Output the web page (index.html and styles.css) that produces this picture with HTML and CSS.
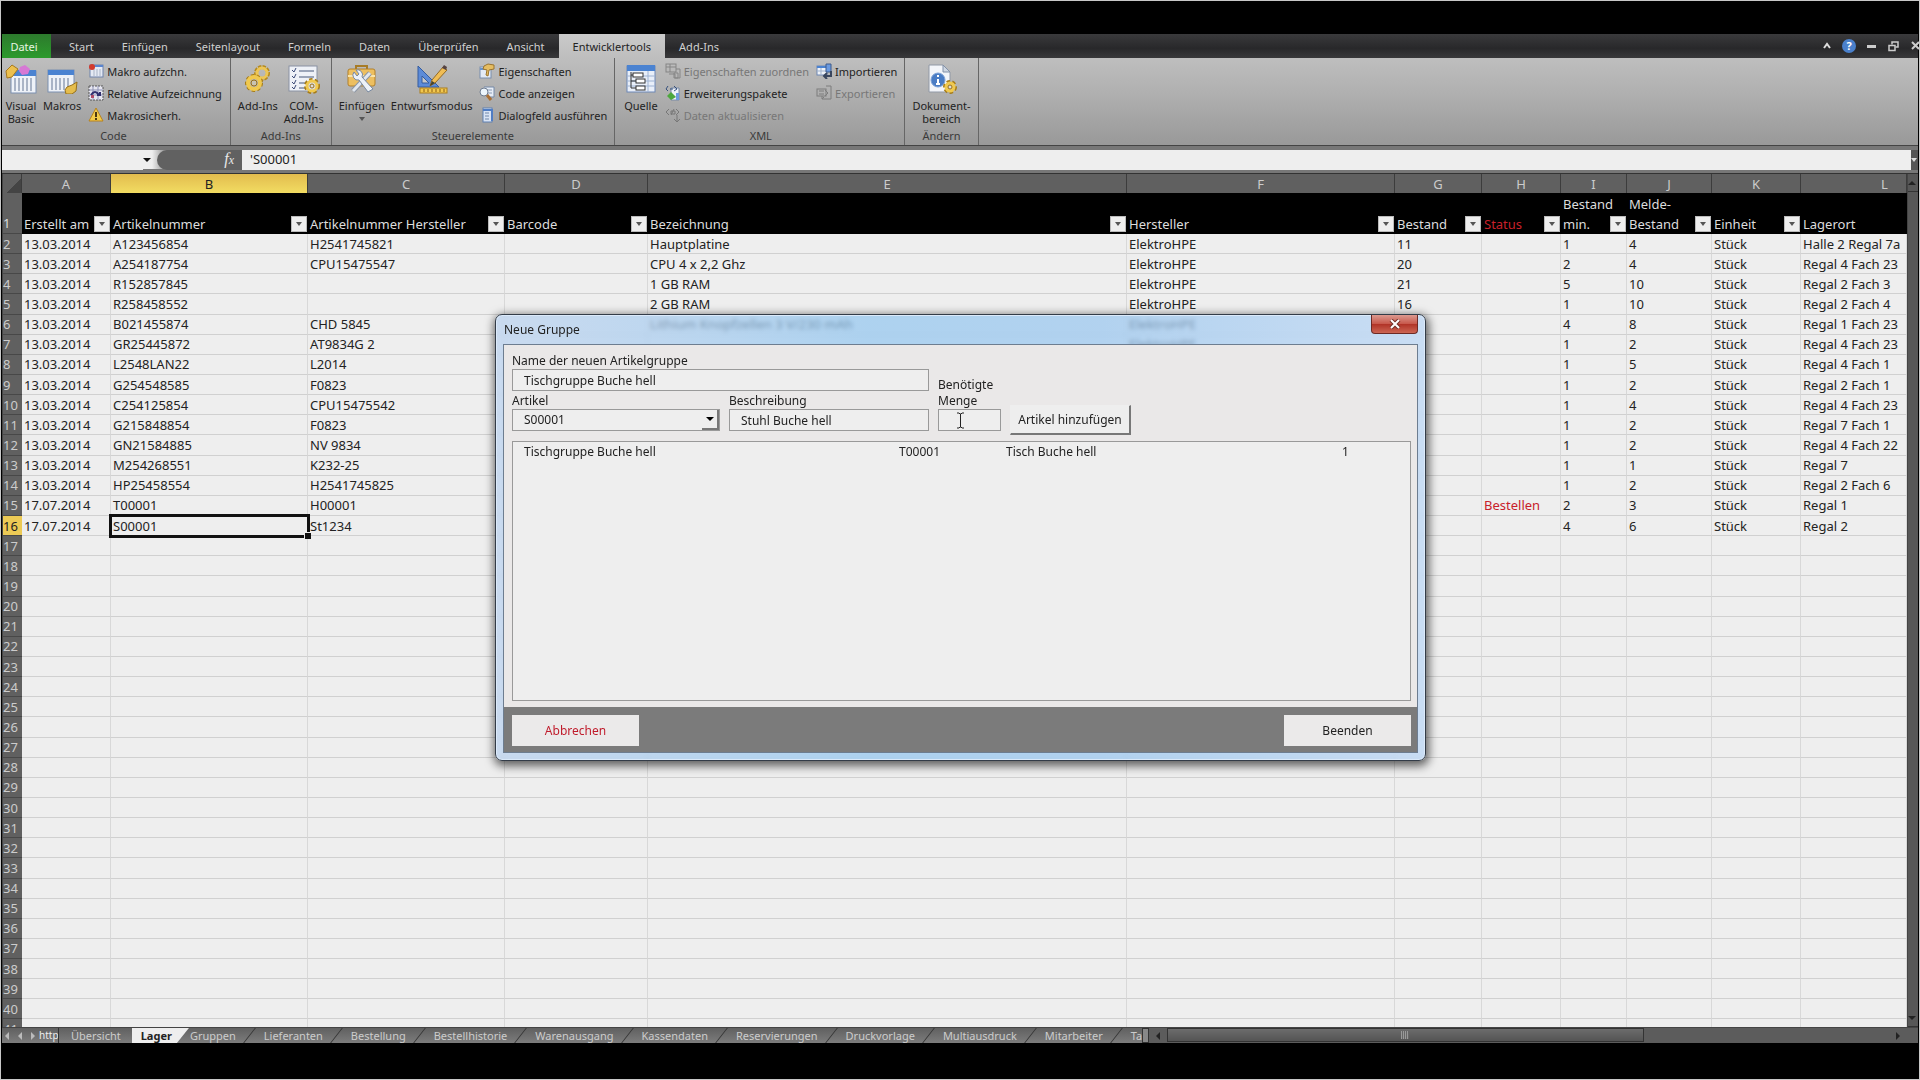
FILE: index.html
```html
<!DOCTYPE html>
<html lang="de">
<head>
    <meta charset="UTF-8">
    <meta name="viewport" content="width=device-width, initial-scale=1.0">
    <title>Lager</title>
    <link rel="stylesheet" href="styles.css">
</head>
<body>
    <!-- ribbon tabs -->
    <nav class="tabs">
        <button class="tab file">Datei</button>
        <button class="tab">Start</button>
        <button class="tab">Einfügen</button>
        <button class="tab">Seitenlayout</button>
        <button class="tab">Formeln</button>
        <button class="tab">Daten</button>
        <button class="tab">Überprüfen</button>
        <button class="tab">Ansicht</button>
        <button class="tab active">Entwicklertools</button>
        <button class="tab">Add-Ins</button>
        <div class="window-buttons">
            <button class="win" aria-label="Menüband minimieren"><svg width="10" height="10" viewBox="0 0 10 10"><path d="M2 7l3-4 3 4" fill="none" stroke="#ddd" stroke-width="2"/></svg></button>
            <button class="win help" aria-label="Hilfe">?</button>
            <button class="win" aria-label="Minimieren"><svg width="10" height="10" viewBox="0 0 10 10"><rect x="1" y="4" width="9" height="3" fill="#ccc"/></svg></button>
            <button class="win" aria-label="Wiederherstellen"><svg width="11" height="11" viewBox="0 0 11 11" fill="none" stroke="#ccc"><path d="M4 3.500V1h6v5H7.500" stroke-width="1.500"/><rect x="1" y="4.500" width="6" height="5" stroke-width="1.500"/></svg></button>
            <button class="win" aria-label="Schließen"><svg width="10" height="10" viewBox="0 0 10 10"><path d="M2 1l7 7M9 1L2 8" stroke="#ccc" stroke-width="2"/></svg></button>
        </div>
    </nav>

    <div class="ribbon">
        <section class="group">
            <div class="tools">
                <button class="large">
                    <svg width="32" height="30" viewBox="0 0 32 30"><rect x="6" y="7" width="25" height="22" fill="#eef2f8" stroke="#7b8fb0"/><rect x="6" y="6" width="25" height="6" fill="#4b83d1"/><path d="M10 14v13M14 14v13M18 14v13M22 14v13M26 14v13" stroke="#a9b4c6" stroke-width="2"/><path d="M1 7l6-6 6 4-6 8-5 1z" fill="#ecc04e" stroke="#a8791c"/><path d="M15 3l5-2 5 4-2 5-6 1-3-4z" fill="#d678d4"/></svg>
                    Visual<br>Basic
                </button>
                <button class="large">
                    <svg width="32" height="30" viewBox="0 0 32 30"><rect x="2" y="6" width="26" height="22" fill="#eef2f8" stroke="#7b8fb0"/><rect x="2" y="6" width="26" height="5" fill="#4b83d1"/><path d="M6 14v12M10 14v12M14 14v12M18 14v12M22 14v12" stroke="#a9b4c6" stroke-width="2"/><path d="M21 23l5-2 5-3-1 9-4 3h-6l-1-4z" fill="#e5bd4d" stroke="#97701c"/></svg>
                    Makros
                </button>
                <div class="stack">
                    <button class="small"><svg width="16" height="16" viewBox="0 0 16 16"><rect x="2" y="2" width="13" height="12" fill="#e5eaf4" stroke="#6f83ab"/><path d="M2 3h13" stroke="#5a85cf" stroke-width="2"/><path d="M6 6v7M9 6v7M12 6v7" stroke="#a9b4c6"/><circle cx="4" cy="4" r="3" fill="#d23b2e"/></svg>Makro aufzchn.</button>
                    <button class="small"><svg width="16" height="16" viewBox="0 0 16 16"><rect x="1" y="1" width="14" height="14" fill="#e6e6f0" stroke="#555" stroke-dasharray="2 1"/><path d="M1 5h14M1 10h14M5 1v14M10 1v14" stroke="#8f93b5"/><path d="M3 10q4-6 8 0M9 10h3V7" fill="none" stroke="#31306e" stroke-width="2"/><rect x="3" y="10" width="3" height="3" fill="#b14b67"/></svg>Relative Aufzeichnung</button>
                    <button class="small"><svg width="16" height="16" viewBox="0 0 16 16"><path d="M8 1l7 13H1z" fill="#f3cb4b" stroke="#b8821c"/><path d="M8 5v5M8 11v2" stroke="#4a3510" stroke-width="2"/></svg>Makrosicherh.</button>
                </div>
            </div>
            <h2>Code</h2>
        </section>

        <section class="group">
            <div class="tools">
                <button class="large">
                    <svg width="32" height="30" viewBox="0 0 32 30" fill="none"><circle cx="20" cy="9" r="6" stroke="#b58a1e" stroke-width="4" stroke-dasharray="3 1"/><circle cx="20" cy="9" r="5" stroke="#edc655" stroke-width="3"/><circle cx="12" cy="19" r="7" stroke="#a67c18" stroke-width="4" stroke-dasharray="3 2"/><circle cx="12" cy="19" r="6" stroke="#f0c94f" stroke-width="4"/><circle cx="12" cy="19" r="3" fill="#c9c3b2" stroke="#97701c"/></svg>
                    Add-Ins
                </button>
                <button class="large">
                    <svg width="32" height="30" viewBox="0 0 32 30" fill="none"><rect x="1" y="2" width="28" height="25" fill="#eef1f7" stroke="#8a92a3"/><path d="M4 6l2 2 2-4M4 12l2 2 2-4M4 18l2 2 2-4M4 23l2 2 2-4" stroke="#3b4a78"/><path d="M11 7h15M11 13h15M11 19h8M11 24h7" stroke="#9aa4b8" stroke-width="2"/><circle cx="24" cy="22" r="6" stroke="#a67c18" stroke-width="4" stroke-dasharray="3 2"/><circle cx="24" cy="22" r="5" fill="#ddd" stroke="#f0c94f" stroke-width="3"/><circle cx="24" cy="22" r="2" fill="#ddd" stroke="#97701c"/></svg>
                    COM-<br>Add-Ins
                </button>
            </div>
            <h2>Add-Ins</h2>
        </section>

        <section class="group">
            <div class="tools">
                <button class="large">
                    <svg width="32" height="30" viewBox="0 0 32 30"><path d="M10 6V2h11v4" fill="none" stroke="#a77b26" stroke-width="2"/><rect x="2" y="5" width="27" height="17" rx="2" fill="#edbf60" stroke="#b1802c"/><path d="M2 12h27" stroke="#f9e4ab" stroke-width="2"/><path d="M7 27L24 9" stroke="#8b95a3" stroke-width="5"/><path d="M7 27L24 9" stroke="#e1e7ef" stroke-width="3"/><path d="M8 8a5 5 0 0 0 5 8l9 12 5-3-11-12a5 5 0 0 0-6-7l3 4-2 2z" fill="#edf2f8" stroke="#7788a0"/></svg>
                    Einfügen
                    <i class="caret"></i>
                </button>
                <button class="large">
                    <svg width="32" height="30" viewBox="0 0 32 30"><path d="M2 2v21h21z" fill="#5c8bd8" stroke="#345c9f"/><path d="M6 12v7h7z" fill="#c8c8c8" stroke="#345c9f"/><rect x="4" y="24" width="27" height="5" fill="#f1c850" stroke="#ac7e1d"/><path d="M8 25v3M12 25v3M16 25v3M20 25v3M24 25v3M28 25v3" stroke="#8c5f12"/><path d="M14 22l2-6L27 3l4 3-12 13z" fill="#f0bd55" stroke="#946a22"/><path d="M26 4l2-3 3 2-1 3z" fill="#554444"/><path d="M14 22l2-5 3 2z" fill="#443"/></svg>
                    Entwurfsmodus
                </button>
                <div class="stack">
                    <button class="small"><svg width="16" height="16" viewBox="0 0 16 16"><rect x="1" y="4" width="11" height="11" fill="#e3ebf6" stroke="#788eae"/><path d="M1 6h11" stroke="#6794cf" stroke-width="2"/><path d="M5 3l4-2 6 1v4l-5 1-1 6-2-1 1-5-4-1z" fill="#e5bd62" stroke="#9a742f"/></svg>Eigenschaften</button>
                    <button class="small"><svg width="16" height="16" viewBox="0 0 16 16"><path d="M5 2h10v10H9" fill="#e7edf6" stroke="#7589a7"/><path d="M7 5h6M8 8h5" stroke="#8b9cb6"/><circle cx="5" cy="7" r="4" fill="#edf5fb" stroke="#6f7c90"/><path d="M8 10l4 5" stroke="#a96f35" stroke-width="3"/></svg>Code anzeigen</button>
                    <button class="small"><svg width="16" height="16" viewBox="0 0 16 16"><rect x="4" y="1" width="9" height="14" fill="#d9e4f5" stroke="#5f80b2"/><path d="M4 3h9M13 2v12" stroke="#4f7dc4" stroke-width="2"/><path d="M6 6h4M6 9h4M6 12h4" stroke="#7088aa"/></svg>Dialogfeld ausführen</button>
                </div>
            </div>
            <h2>Steuerelemente</h2>
        </section>

        <section class="group xml">
            <div class="tools">
                <button class="large">
                    <svg width="32" height="30" viewBox="0 0 32 30" fill="none"><rect x="2" y="2" width="28" height="26" fill="#e9eff9" stroke="#6c87b6"/><rect x="2" y="1" width="28" height="6" fill="#4b83d1"/><path d="M2 12h28M2 17h28M2 22h28M23 7v21" stroke="#9eb3d3"/><path d="M6 8v16h5M6 11h6M6 17h6" stroke="#333"/><rect x="8" y="9" width="10" height="4" fill="#fff" stroke="#333"/><rect x="11" y="15" width="9" height="4" fill="#fff" stroke="#333"/><rect x="11" y="22" width="9" height="4" fill="#fff" stroke="#333"/></svg>
                    Quelle
                </button>
                <div class="stack">
                    <button class="small" disabled><svg width="16" height="16" viewBox="0 0 16 16" fill="none" stroke="#858585"><rect x="1" y="1" width="10" height="8"/><path d="M1 4h10M5 1v8M4 11h6v4h5V6h-4"/><path d="M9 10h4v5H9z"/></svg>Eigenschaften zuordnen</button>
                    <button class="small"><svg width="16" height="16" viewBox="0 0 16 16" fill="none"><path d="M6 3h8v12H6z" fill="#edf1f8" stroke="#788aa6"/><path d="M3 1L1 4l2 2M9 1l3 3-3 2M5 4h3" stroke="#35507c"/><path d="M6 7l5 5-5 3-4-4z" fill="#4ca73d"/><path d="M11 8h3v7h-3z" fill="#6d9bdd"/></svg>Erweiterungspakete</button>
                    <button class="small" disabled><svg width="16" height="16" viewBox="0 0 16 16" fill="none" stroke="#777" stroke-width="1"><path d="M4 2L1 5l3 3M11 2l3 3-3 3M6 8l3-6M6 4h4v3H6zM12 8v7M9 12l3 3 3-3"/></svg>Daten aktualisieren</button>
                </div>
                <div class="stack">
                    <button class="small"><svg width="16" height="16" viewBox="0 0 16 16"><rect x="1" y="3" width="10" height="9" fill="#eef2f8" stroke="#6e87b3"/><path d="M1 4h10" stroke="#4b83d1" stroke-width="2"/><path d="M5 5v7M1 8h10" stroke="#9fb1cc"/><path d="M10 1h5v8h-5z" fill="#6b9ae0" stroke="#3c5b8c"/><path d="M15 8v5H9M11 10l-3 3 3 3" fill="none" stroke="#39465e" stroke-width="2"/></svg>Importieren</button>
                    <button class="small" disabled><svg width="16" height="16" viewBox="0 0 16 16" fill="none" stroke="#7d7d7d"><rect x="1" y="4" width="9" height="7"/><path d="M3 6h5M3 9h5M10 1h5v13H6v-3M9 5l3 3-3 3M6 14l2-2"/></svg>Exportieren</button>
                </div>
            </div>
            <h2>XML</h2>
        </section>

        <section class="group">
            <div class="tools">
                <button class="large">
                    <svg width="32" height="30" viewBox="0 0 32 30" fill="none"><path d="M4 1h14l7 7v20H4z" fill="#f3f5f9" stroke="#9199a6"/><path d="M18 1v7h7z" fill="#cfd7e2" stroke="#8291a8"/><circle cx="13" cy="16" r="7" fill="#4a7cc4" stroke="#7ea3d7"/><path d="M13 11v2M13 15v5M11 20h4" stroke="#fff" stroke-width="2"/><circle cx="25" cy="23" r="5" stroke="#a67c18" stroke-width="4" stroke-dasharray="3 2"/><circle cx="25" cy="23" r="4" fill="#f0d070" stroke="#f0c94f" stroke-width="3"/><circle cx="25" cy="23" r="2" fill="#ddd" stroke="#97701c"/></svg>
                    Dokument-<br>bereich
                </button>
            </div>
            <h2>Ändern</h2>
        </section>
    </div>

    <div class="formula-bar">
        <input class="name-box" aria-label="Namenfeld">
        <i class="caret black"></i>
        <div class="fx"><i>f<small>x</small></i></div>
        <input class="formula" aria-label="Bearbeitungsleiste" value="'S00001">
        <button class="expand" aria-label="Bearbeitungsleiste erweitern"><i class="caret"></i></button>
    </div>

    <div class="sheet">
        <div class="cells">
            <table class="grid">
                <colgroup>
                    <col class="w-num"><col class="w-a"><col class="w-b"><col class="w-c"><col class="w-d"><col class="w-e"><col class="w-f"><col class="w-g"><col class="w-h"><col class="w-i"><col class="w-j"><col class="w-k"><col>
                </colgroup>
                <thead>
                    <tr class="letters"><th class="corner"></th><th>A</th><th class="current">B</th><th>C</th><th>D</th><th>E</th><th>F</th><th>G</th><th>H</th><th>I</th><th>J</th><th>K</th><th class="last">L</th></tr>
                    <tr class="titles" id="titles"><th class="num">1</th></tr>
                </thead>
                <tbody id="rows"></tbody>
            </table>
        </div>
        <div class="vscroll">
            <button aria-label="Nach oben"><i class="arrow up"></i></button>
            <button aria-label="Nach unten"><i class="arrow down"></i></button>
        </div>
    </div>

    <footer class="bottom">
        <div class="nav"><i class="arrow left"></i><i class="arrow left"></i><i class="arrow right"></i><span>http</span></div>
        <div class="sheets">
            <button class="sheet-tab">Übersicht</button>
            <button class="sheet-tab active">Lager</button>
            <button class="sheet-tab">Gruppen</button>
            <button class="sheet-tab">Lieferanten</button>
            <button class="sheet-tab">Bestellung</button>
            <button class="sheet-tab">Bestellhistorie</button>
            <button class="sheet-tab">Warenausgang</button>
            <button class="sheet-tab">Kassendaten</button>
            <button class="sheet-tab">Reservierungen</button>
            <button class="sheet-tab">Druckvorlage</button>
            <button class="sheet-tab">Multiausdruck</button>
            <button class="sheet-tab">Mitarbeiter</button>
            <button class="sheet-tab">Ta</button>
        </div>
        <div class="hscroll">
            <i class="split"></i>
            <button aria-label="Nach links"><i class="arrow left dark"></i></button>
            <div class="track"><div class="thumb"><i class="grip"></i></div></div>
            <button aria-label="Nach rechts"><i class="arrow right dark"></i></button>
        </div>
    </footer>

    <!-- user form -->
    <div class="dialog" role="dialog" aria-labelledby="dialog-title">
        <div class="title-bar">
            <span id="dialog-title">Neue Gruppe</span>
            <button class="close" aria-label="Schließen"><svg width="12" height="10" viewBox="0 0 12 10"><path d="M2 1l8 8M10 1L2 9" stroke="#703028" stroke-width="4"/><path d="M2 1l8 8M10 1L2 9" stroke="#fff" stroke-width="2"/></svg></button>
        </div>
        <div class="content">
            <form class="form">
                <label class="wide" for="group-name">Name der neuen Artikelgruppe</label>
                <input class="wide" id="group-name" value="Tischgruppe Buche hell">
                <label class="amount" for="amount">Benötigte<br>Menge</label>
                <label class="third" for="article">Artikel</label>
                <label class="third" for="description">Beschreibung</label>
                <div class="combo fourth">
                    <select id="article"><option>S00001</option></select>
                    <i class="drop"></i>
                </div>
                <input class="fourth" id="description" value="Stuhl Buche hell">
                <input class="fourth" id="amount">
                <button class="add fourth" type="button">Artikel hinzufügen</button>
            </form>
            <div class="list">
                <table>
                    <tr><td class="l-group">Tischgruppe Buche hell</td><td class="l-number">T00001</td><td class="l-name">Tisch Buche hell</td><td>1</td></tr>
                </table>
            </div>
            <div class="actions">
                <button class="cancel">Abbrechen</button>
                <button>Beenden</button>
            </div>
        </div>
        <svg class="ibeam" width="9" height="17" viewBox="0 0 9 17"><path d="M1 1h2l1 1h1l1-1h2M4.500 2v13M1 16h2l1-1h1l1 1h2" fill="none" stroke="#222"/></svg>
    </div>

    <script>
        const titles = ['Erstellt am', 'Artikelnummer', 'Artikelnummer Hersteller', 'Barcode', 'Bezeichnung', 'Hersteller',
            'Bestand', 'Status', 'Bestand<br>min.', 'Melde-<br>Bestand', 'Einheit', 'Lagerort'];

        const rows = [
            ['13.03.2014', 'A123456854', 'H2541745821', '', 'Hauptplatine', 'ElektroHPE', '11', '', '1', '4', 'Stück', 'Halle 2 Regal 7a'],
            ['13.03.2014', 'A254187754', 'CPU15475547', '', 'CPU 4 x 2,2 Ghz', 'ElektroHPE', '20', '', '2', '4', 'Stück', 'Regal 4 Fach 23'],
            ['13.03.2014', 'R152857845', '', '', '1 GB RAM', 'ElektroHPE', '21', '', '5', '10', 'Stück', 'Regal 2 Fach 3'],
            ['13.03.2014', 'R258458552', '', '', '2 GB RAM', 'ElektroHPE', '16', '', '1', '10', 'Stück', 'Regal 2 Fach 4'],
            ['13.03.2014', 'B021455874', 'CHD 5845', '', 'Lithium Knopfzellen 3 V/230 mAh', 'ElektroHPE', '', '', '4', '8', 'Stück', 'Regal 1 Fach 23'],
            ['13.03.2014', 'GR25445872', 'AT9834G 2', '', '', 'ElektroHPE', '', '', '1', '2', 'Stück', 'Regal 4 Fach 23'],
            ['13.03.2014', 'L2548LAN22', 'L2014', '', '', '', '', '', '1', '5', 'Stück', 'Regal 4 Fach 1'],
            ['13.03.2014', 'G254548585', 'F0823', '', '', '', '', '', '1', '2', 'Stück', 'Regal 2 Fach 1'],
            ['13.03.2014', 'C254125854', 'CPU15475542', '', '', '', '', '', '1', '4', 'Stück', 'Regal 4 Fach 23'],
            ['13.03.2014', 'G215848854', 'F0823', '', '', '', '', '', '1', '2', 'Stück', 'Regal 7 Fach 1'],
            ['13.03.2014', 'GN21584885', 'NV 9834', '', '', '', '', '', '1', '2', 'Stück', 'Regal 4 Fach 22'],
            ['13.03.2014', 'M254268551', 'K232-25', '', '', '', '', '', '1', '1', 'Stück', 'Regal 7'],
            ['13.03.2014', 'HP25458554', 'H2541745825', '', '', '', '', '', '1', '2', 'Stück', 'Regal 2 Fach 6'],
            ['17.07.2014', 'T00001', 'H00001', '', '', '', '', 'Bestellen', '2', '3', 'Stück', 'Regal 1'],
            ['17.07.2014', 'S00001', 'St1234', '', '', '', '', '', '4', '6', 'Stück', 'Regal 2']
        ];

        titles.forEach(function(title, i) {
            const filter = i < 11 ? '<button class="filter" aria-label="Filter"><i class="caret"></i></button>' : '';
            document.querySelector('#titles').innerHTML +=
                `<th><div class="title ${title === 'Status' ? 'red' : ''}"><span>${title}</span>${filter}</div></th>`;
        });

        //rows 17 to 41 are empty
        let html = '';
        for (let n = 2; n <= 41; n++) {
            const row = rows[n - 2] || Array(12).fill('');
            html += `<tr><th class="num ${n === 16 ? 'current' : ''}">${n}</th>`;
            row.forEach(function(cell, i) {
                const name = n === 16 && i === 1 ? 'selected' : i === 7 ? 'red' : '';
                html += `<td class="${name}">${cell}</td>`;
            });
            html += '</tr>';
        }
        document.querySelector('#rows').innerHTML = html;
    </script>
</body>
</html>
```

FILE: styles.css
```css
* {
    box-sizing: border-box;
}
body {
    margin: 0;
    height: 100vh;
    padding: 33px 1px 36px;
    border: 1px solid #c8c8c8;
    display: flex;
    flex-direction: column;
    overflow: hidden;
    background: #000;
    color: #222;
    font-family: "Noto Sans", sans-serif;
    font-size: 13px;
}
button, input, select {
    font: inherit;
    color: inherit;
    margin: 0;
    padding: 0;
    border: none;
    border-radius: 0;
    background: none;
}
svg {
    display: block;
    flex: none;
}

/* ribbon tabs */
.tabs {
    display: flex;
    height: 24px;
    flex: none;
    background: linear-gradient(#3a3a3c, #28282a 60%, #38383a);
    font-size: 11px;
}
.tab {
    padding: 0 14px;
    color: #d0d0d0;
}
.tab.file {
    width: 49px;
    margin-right: 4px;
    padding: 0 5px 0 0;
    color: #e8f5e2;
    background: linear-gradient(#2d7a2d, #2c9a2c);
}
.tab.active {
    background: linear-gradient(#cacaca, #bebebe);
    color: #222;
}
.window-buttons {
    display: flex;
    align-items: center;
    gap: 8px;
    margin-left: auto;
    margin-right: -4px;
}
.win {
    display: flex;
    justify-content: center;
    width: 14px;
}
.win.help {
    height: 14px;
    line-height: 14px;
    border-radius: 50%;
    background: #4a80cc;
    color: #fff;
    font-weight: bold;
}

/* ribbon */
.ribbon {
    display: flex;
    flex: none;
    height: 87px;
    background: linear-gradient(#bebebe, #b0b0b0 40%, #999);
    font-size: 11px;
}
.group {
    padding: 2px 5px 0 0;
    border-right: 1px solid #666;
    display: flex;
    flex-direction: column;
}
.group + .group {
    padding-left: 4px;
    padding-right: 4px;
}
.group.xml {
    padding-left: 6px;
}
.tools {
    display: flex;
    height: 68px;
}
.group h2 {
    margin: 0;
    font-size: 11px;
    font-weight: normal;
    line-height: 16px;
    text-align: center;
    color: #3a3a3a;
}
.large {
    display: flex;
    flex-direction: column;
    align-items: center;
    padding: 4px 3px 0;
    line-height: 13px;
    text-align: center;
}
.large svg {
    margin-bottom: 5px;
}
.large .caret {
    margin-top: 5px;
}
.stack {
    display: flex;
    flex-direction: column;
    margin-left: 3px;
}
.small {
    display: flex;
    align-items: center;
    gap: 3px;
    height: 22px;
    padding: 0 3px 0 1px;
    white-space: nowrap;
}
.small:disabled {
    color: #777;
}
.caret {
    width: 0;
    height: 0;
    border: 3px solid transparent;
    border-top: 4px solid #555;
    border-bottom: none;
}
.caret.black {
    border-top-color: #111;
    border-left-width: 4px;
    border-right-width: 4px;
    margin-right: 6px;
}

/* formula bar */
.formula-bar {
    display: flex;
    align-items: center;
    flex: none;
    height: 29px;
    border-top: 1px solid #444;
    border-bottom: 1px solid #333;
    background: linear-gradient(90deg, #eee 150px, #666 170px);
    box-shadow: inset 0 4px #777, inset 0 -4px #777;
}
.name-box {
    width: 141px;
    height: 20px;
    background: #eee;
}
.fx {
    width: 85px;
    height: 20px;
    padding-right: 8px;
    border-radius: 10px 0 0 10px;
    background: #616161;
    color: #e8e8e8;
    font: 16px/18px "Liberation Serif", serif;
    text-align: right;
}
.fx small {
    font-size: 12px;
}
.formula {
    flex: 1;
    height: 20px;
    padding: 0 8px 1px;
    background: #eee;
}
.expand {
    width: 7px;
    height: 20px;
    background: #555;
}
.expand .caret {
    display: block;
    border-top-color: #ddd;
}

/* sheet */
.sheet {
    flex: 1;
    min-height: 0;
    display: flex;
    border-left: 1px solid #444;
}
.cells {
    flex: 1;
    overflow: hidden;
    background: #eee;
}
.grid {
    width: 100%;
    height: 866px;
    table-layout: fixed;
    border-collapse: separate;
    border-spacing: 0;
}
.w-num { width: 19px; }
.w-a { width: 89px; }
.w-b { width: 197px; }
.w-c { width: 197px; }
.w-d { width: 143px; }
.w-e { width: 479px; }
.w-f { width: 268px; }
.w-g { width: 87px; }
.w-h { width: 79px; }
.w-i { width: 66px; }
.w-j { width: 85px; }
.w-k { width: 89px; }
.grid th, .grid td {
    padding: 0 2px;
    font-weight: normal;
    line-height: 18px;
    text-align: left;
    white-space: nowrap;
}
.grid td {
    border-right: 1px solid #d8d8d8;
    border-bottom: 1px solid #d0d0d0;
}
.grid .letters th {
    height: 19px;
    background: #606060;
    border-right: 1px solid #3c3c3c;
    color: #ccc;
    text-align: center;
}
.grid .letters .last {
    padding-left: 64px;
}
.grid .letters .current {
    background: linear-gradient(#e2bc4e, #f2dc62);
    color: #222;
}
.grid .letters .corner {
    background: linear-gradient(135deg, #606060 60%, #444 60%);
}
.grid .titles th {
    height: 41px;
    padding-right: 1px;
    vertical-align: bottom;
    background: #000;
    color: #ddd;
    line-height: 20px;
}
.grid .num {
    padding: 0;
    background: #606060;
    border-bottom: 1px solid #484848;
    color: #ccc;
}
.grid .titles .num {
    background: #606060;
}
.grid .num.current {
    background: #ecca55;
    color: #222;
}
.grid .red {
    color: #c8202a;
}
.title {
    display: flex;
    justify-content: space-between;
    align-items: flex-end;
}
.filter {
    display: flex;
    align-items: center;
    justify-content: center;
    width: 16px;
    height: 16px;
    margin-bottom: 2px;
    margin-left: -10px;
    background: #eee;
    border: 1px solid #bbb;
}
.grid .selected {
    outline: 3px solid #111;
    outline-offset: -1px;
    position: relative;
}
.selected::after {
    content: "";
    position: absolute;
    right: -4px;
    bottom: -4px;
    width: 6px;
    height: 6px;
    background: #111;
    border-top: 1px solid #eee;
    border-left: 1px solid #eee;
}
.vscroll {
    display: flex;
    flex-direction: column;
    justify-content: space-between;
    width: 11px;
    background: #575757;
    border-left: 1px solid #444;
}
.vscroll button {
    height: 18px;
    border-bottom: 1px solid #333;
}
.arrow {
    display: block;
    width: 0;
    height: 0;
    border: 4px solid transparent;
}
.arrow.up { border-bottom-color: #222; border-top: none; }
.arrow.down { border-top-color: #222; border-bottom: none; }
.arrow.left { border-right-color: #bbb; border-left: none; }
.arrow.right { border-left-color: #bbb; border-right: none; }
.arrow.left.dark { border-right-color: #222; }
.arrow.right.dark { border-left-color: #222; }

/* sheet tabs and scrollbar */
.bottom {
    display: flex;
    flex: none;
    height: 16px;
    background: linear-gradient(#606060, #7c7c7c);
    border-top: 1px solid #444;
    font-size: 11px;
    line-height: 15px;
}
.nav {
    display: flex;
    align-items: center;
    gap: 9px;
    width: 57px;
    padding-left: 3px;
    overflow: hidden;
    color: #eee;
    border-right: 1px solid #333;
}
.nav span {
    margin-left: -5px;
    font-size: 10px;
}
.sheets {
    display: flex;
    width: 1083px;
    overflow: hidden;
}
.sheet-tab {
    position: relative;
    flex: none;
    padding: 0 14px;
    color: #ccc;
}
.sheet-tab::after {
    content: "";
    position: absolute;
    right: 0;
    top: 0;
    height: 15px;
    border-right: 1px solid #333;
    transform: skewX(-38deg);
}
.sheet-tab:first-child {
    padding: 0 11px 0 12px;
}
.sheet-tab:first-child::after {
    display: none;
}
.sheet-tab.active {
    padding: 0 17px 0 9px;
    margin-right: -13px;
    background: #eee;
    color: #222;
    font-weight: bold;
    clip-path: polygon(0 0, 100% 0, calc(100% - 12px) 100%, 0 100%);
}
.hscroll {
    display: flex;
    flex: 1;
    background: #5c5c5c;
}
.hscroll button {
    display: flex;
    align-items: center;
    justify-content: center;
    width: 18px;
}
.hscroll button:last-child {
    margin-right: 11px;
}
.split {
    width: 7px;
    border: 1px solid #333;
    background: #888;
}
.track {
    flex: 1;
}
.thumb {
    display: flex;
    align-items: center;
    justify-content: center;
    width: 66%;
    height: 14px;
    border: 1px solid #333;
    background: linear-gradient(#6c6c6c, #545454);
}
.grip {
    width: 8px;
    height: 8px;
    background: repeating-linear-gradient(90deg, #999 0 1px, #666 1px 2px);
}

/* user form, lies over the sheet */
.dialog {
    position: absolute;
    left: 495px;
    top: 314px;
    width: 931px;
    padding: 0 7px 7px;
    border: 1px solid #333c48;
    border-radius: 7px;
    background: linear-gradient(90deg, rgba(186, 210, 240, .7), rgba(146, 198, 240, .7) 40%, rgba(152, 198, 240, .7) 65%, rgba(186, 214, 246, .7));
    backdrop-filter: blur(2px);
    box-shadow: inset 0 0 0 1px #dceafa, 1px 3px 10px 2px rgba(0, 0, 0, .6);
    color: #222;
    font-size: 12px;
}
.title-bar {
    display: flex;
    justify-content: space-between;
    height: 29px;
    padding-left: 1px;
    line-height: 29px;
}
.close {
    display: flex;
    align-items: center;
    justify-content: center;
    width: 47px;
    height: 19px;
    border: 1px solid #6d2a25;
    border-top: none;
    border-radius: 0 0 4px 4px;
    background: linear-gradient(#dc9a90, #c8594c 48%, #b03226 50%, #cc6654);
}
.content {
    border: 1px solid #6d7d90;
    background: #eae8e8;
}
.form {
    display: grid;
    grid-template-columns: 208px 200px 63px 121px;
    grid-template-rows: 16px 22px 18px 22px;
    column-gap: 9px;
    padding: 8px 8px 10px;
    line-height: 16px;
}
.wide {
    grid-column: 1 / 3;
}
.amount {
    grid-column: 3;
    grid-row: 2 / 4;
    align-self: end;
}
.third {
    grid-row: 3;
    padding-top: 2px;
}
.fourth {
    grid-row: 4;
}
.form input, .form select {
    width: 100%;
    height: 22px;
    padding: 0 11px;
    border: 1px solid #999;
    background: #eee;
}
.form input.wide {
    grid-row: 2;
}
.form select {
    appearance: none;
}
.combo {
    position: relative;
}
.drop {
    position: absolute;
    right: 1px;
    top: 1px;
    width: 17px;
    height: 20px;
    background: #eee;
    border-right: 2px solid #777;
    border-bottom: 2px solid #777;
}
.drop::after {
    content: "";
    position: absolute;
    left: 4px;
    top: 7px;
    border: 4px solid transparent;
    border-top-color: #000;
    border-bottom: none;
}
.form .add {
    height: 30px;
    align-self: center;
    background: #eee;
    border: 1px solid #eee;
    border-right: 2px solid #777;
    border-bottom: 2px solid #777;
}
.list {
    height: 260px;
    margin: 0 6px 6px 8px;
    border: 1px solid #999;
    background: #eee;
}
.list table {
    width: 100%;
    table-layout: fixed;
    border-spacing: 0;
    line-height: 20px;
}
.list td {
    padding: 0 0 0 11px;
}
.l-group { width: 375px; }
.l-number { width: 107px; }
.l-name { width: 336px; }
.actions {
    display: flex;
    justify-content: space-between;
    padding: 8px 6px 6px 8px;
    background: #7b7b7b;
}
.actions button {
    width: 127px;
    height: 31px;
    background: #ebeaea;
}
.actions .cancel {
    color: #c01c2c;
}
.ibeam {
    position: absolute;
    left: 460px;
    top: 97px;
}
```
